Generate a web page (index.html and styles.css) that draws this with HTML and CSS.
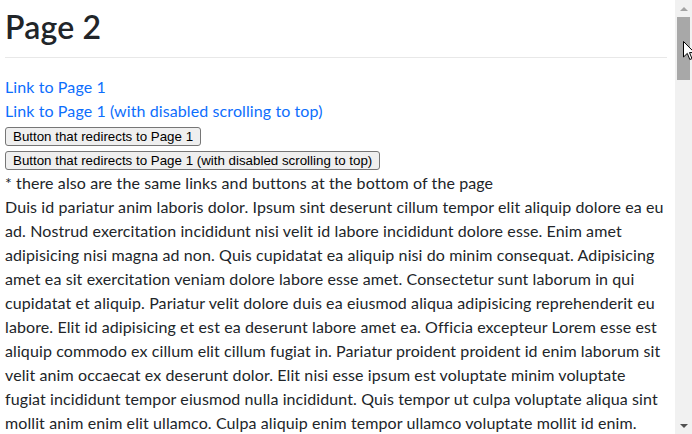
FILE: index.html
```html
<!DOCTYPE html>
<html lang="en">
<head>
<meta charset="utf-8">
<title>Page 2</title>
<link rel="stylesheet" href="styles.css">
</head>
<body>
<div class="window">
  <main class="page">
    <h1 class="title">Page 2</h1>
    <div class="actions">
      <div class="line"><a class="link" href="#">Link to Page 1</a></div>
      <div class="line"><a class="link" href="#">Link to Page 1 (with disabled scrolling to top)</a></div>
      <div class="line"><button class="btn" type="button">Button that redirects to Page 1</button></div>
      <div class="line"><button class="btn" type="button">Button that redirects to Page 1 (with disabled scrolling to top)</button></div>
    </div>
    <p class="note">* there also are the same links and buttons at the bottom of the page</p>
    <p class="text">Duis id pariatur anim laboris dolor. Ipsum sint deserunt cillum tempor elit aliquip dolore ea eu ad. Nostrud exercitation incididunt nisi velit id labore incididunt dolore esse. Enim amet adipisicing nisi magna ad non. Quis cupidatat ea aliquip nisi do minim consequat. Adipisicing amet ea sit exercitation veniam dolore labore esse amet. Consectetur sunt laborum in qui cupidatat et aliquip. Pariatur velit dolore duis ea eiusmod aliqua adipisicing reprehenderit eu labore. Elit id adipisicing et est ea deserunt labore amet ea. Officia excepteur Lorem esse est aliquip commodo ex cillum elit cillum fugiat in. Pariatur proident proident id enim laborum sit velit anim occaecat ex deserunt dolor. Elit nisi esse ipsum est voluptate minim voluptate fugiat incididunt tempor eiusmod nulla incididunt. Quis tempor ut culpa voluptate aliqua sint mollit anim enim elit ullamco. Culpa aliquip enim tempor ullamco voluptate mollit id enim. Consequat ea exercitation laborum officia nulla dolor duis ad sunt. Ullamco commodo ad nostrud dolor aute ut cupidatat laborum.</p>
  </main>
  <div class="scrollbar" aria-hidden="true">
    <div class="arrow arrow-up"></div>
    <div class="track"><div class="thumb"></div></div>
    <div class="arrow arrow-down"></div>
  </div>
</div>
<svg class="cursor" width="12" height="20" viewBox="0 0 12 20" aria-hidden="true">
  <path d="M0.5 0.5 L0.5 16 L4.3 12.4 L6.8 18.5 L9 17.6 L6.5 11.6 L11.5 11.6 Z" fill="#fff" stroke="#000" stroke-width="1"/>
</svg>
</body>
</html>
```

FILE: styles.css
```css
html, body {
  margin: 0;
  padding: 0;
  height: 100%;
  overflow: hidden;
  background: #fff;
}

body {
  font-family: Lato, "Noto Sans", "Liberation Sans", sans-serif;
  font-size: 16px;
  line-height: 24px;
  letter-spacing: 0.1px;
  color: #212529;
}

.window {
  display: flex;
  height: 100vh;
}

.page {
  flex: 1;
  min-width: 0;
  padding: 0 6px 0 5px;
  overflow: hidden;
}

.title {
  margin: 8px 2px 0 0;
  padding-bottom: 11px;
  border-bottom: 1px solid #e8e8e8;
  font-size: 32px;
  line-height: 38px;
  font-weight: 600;
  letter-spacing: 0.2px;
  color: #212529;
}

.actions {
  margin-top: 17px;
}

.line {
  height: 24px;
}

.link {
  color: #0d6efd;
  text-decoration: none;
}

.btn {
  font-family: "Liberation Sans", Arial, sans-serif;
  font-size: 13.333px;
  line-height: 15px;
  letter-spacing: 0;
  color: #000;
  background: #efefef;
  border: 1px solid #767676;
  border-radius: 3px;
  padding: 1px 7px;
  margin: 0;
}

.note,
.text {
  margin: 0;
}

.scrollbar {
  width: 17px;
  flex: none;
  background: #f1f1f1;
  display: flex;
  flex-direction: column;
}

.arrow {
  height: 17px;
  flex: none;
  display: flex;
  align-items: center;
  justify-content: center;
}

.arrow-up::before {
  content: "";
  border-left: 4px solid transparent;
  border-right: 4px solid transparent;
  border-bottom: 4px solid #a3a3a3;
}

.arrow-down::before {
  content: "";
  border-left: 4px solid transparent;
  border-right: 4px solid transparent;
  border-top: 4px solid #505050;
}

.track {
  flex: 1;
  padding: 0 2px;
}

.thumb {
  height: 63px;
  background: #a8a8a8;
}

.cursor {
  position: absolute;
  left: 683px;
  top: 41px;
}
```
